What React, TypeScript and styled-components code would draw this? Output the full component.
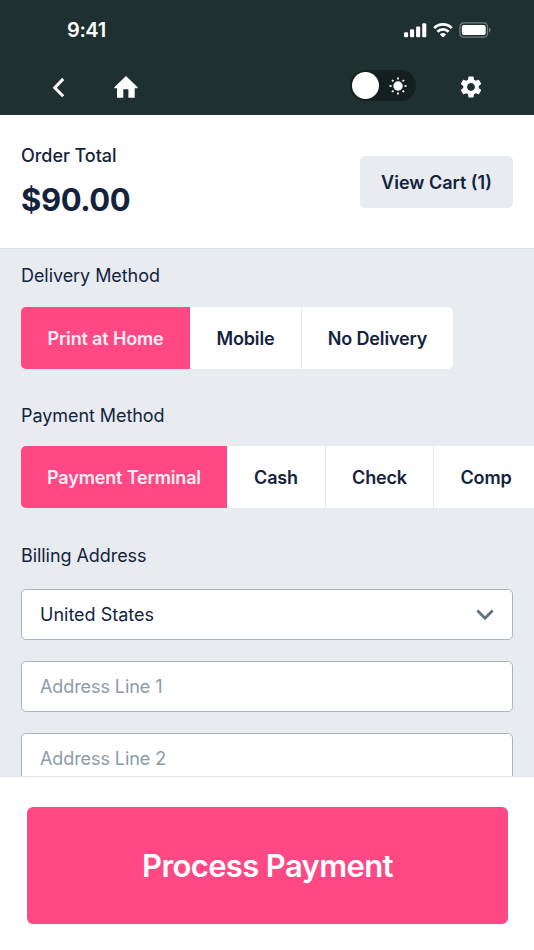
import React from "react";
import styled, { createGlobalStyle } from "styled-components";
import { MdSettings } from "react-icons/md";

const GlobalStyle = createGlobalStyle`
  *, *::before, *::after { box-sizing: border-box; }
  html, body { margin: 0; height: 100%; }
  #root { height: 100%; }
  body {
    font-family: Inter, "Liberation Sans", sans-serif;
    color: #14233d;
    background: #fff;
    overflow: hidden;
  }
  button, input { font: inherit; color: inherit; margin: 0; }
  svg { display: block; flex: none; }
`;

const Screen = styled.div`
  width: 534px;
  height: 950px;
  display: flex;
  flex-direction: column;
  overflow: hidden;
  background: #fff;
`;

const Header = styled.header`
  flex: none;
  height: 115px;
  background: #1e302f;
  color: #fff;
`;

const StatusBar = styled.div`
  height: 60px;
  padding: 0 43px 0 67px;
  display: flex;
  align-items: center;
  justify-content: space-between;
`;

const Clock = styled.span`
  font-size: 20px;
  font-weight: 600;
  line-height: 24px;
  letter-spacing: -0.4px;
`;

const StatusIcons = styled.div`
  display: flex;
  align-items: center;
  gap: 6px;
`;

const NavBar = styled.nav`
  height: 53px;
  padding: 0 50px;
  display: flex;
  align-items: center;
  justify-content: space-between;
`;

const NavGroup = styled.div<{ $gap: number }>`
  display: flex;
  align-items: center;
  gap: ${(p) => p.$gap}px;
`;

const IconButton = styled.button`
  display: flex;
  padding: 0;
  border: 0;
  background: none;
  color: #fff;
`;

const ThemeToggle = styled.button`
  width: 66px;
  height: 31px;
  margin-bottom: 2px;
  padding: 0 8px 0 2px;
  display: flex;
  align-items: center;
  justify-content: space-between;
  border: 0;
  border-radius: 16px;
  background: #13201f;
  color: #fff;
`;

const Knob = styled.span`
  width: 27px;
  height: 27px;
  border-radius: 50%;
  background: #fff;
`;

const Summary = styled.section`
  flex: none;
  height: 134px;
  padding: 0 21px;
  display: flex;
  justify-content: space-between;
  align-items: center;
  border-bottom: 1px solid #d9e1ea;
`;

const TotalLabel = styled.div`
  margin-top: 1px;
  font-size: 18px;
  line-height: 24px;
  font-weight: 500;
  letter-spacing: -0.05px;
`;

const TotalAmount = styled.div`
  margin-top: 12px;
  font-size: 31px;
  line-height: 40px;
  font-weight: 700;
  letter-spacing: -0.4px;
`;

const CartButton = styled.button`
  width: 153px;
  height: 52px;
  padding: 1px 0 0;
  border: 0;
  border-radius: 5px;
  background: #e8ebf0;
  font-size: 18px;
  font-weight: 600;
`;

const Content = styled.main`
  flex: 1;
  min-height: 0;
  overflow: hidden;
  padding-left: 21px;
  background: #e8ebf0;
`;

const SectionTitle = styled.h2<{ $top: number; $bottom: number }>`
  margin: ${(p) => p.$top}px 0 ${(p) => p.$bottom}px;
  font-size: 18px;
  line-height: 24px;
  font-weight: 400;
  letter-spacing: -0.06px;
`;

const Segments = styled.div`
  height: 62px;
  display: flex;
  overflow: hidden;
`;

const Segment = styled.button<{ $width: number; $active?: boolean }>`
  flex: none;
  width: ${(p) => p.$width}px;
  padding: 0;
  border: 0;
  font-size: 18px;
  font-weight: 600;
  letter-spacing: -0.15px;
  color: ${(p) => (p.$active ? "#ffeff4" : "#14233d")};
  background: ${(p) => (p.$active ? "#ff4884" : "#fff")};
  &:first-child { border-radius: 5px 0 0 5px; }
  &:last-child { border-radius: 0 5px 5px 0; }
  &:nth-child(n + 3) { border-left: 1px solid #e8ebf3; }
`;

const Fields = styled.div`
  display: flex;
  flex-direction: column;
  gap: 21px;
  padding-right: 21px;
`;

const Field = styled.div`
  flex: none;
  height: 51px;
  padding: 0 18px;
  display: flex;
  align-items: center;
  justify-content: space-between;
  border: 1px solid #aab5c4;
  border-radius: 5px;
  background: #fff;
  font-size: 18px;
`;

const TextInput = styled.input`
  width: 100%;
  padding: 0;
  border: 0;
  outline: 0;
  background: transparent;
  letter-spacing: -0.08px;
  &::placeholder { color: #8c9bab; opacity: 1; }
`;

const Footer = styled.footer`
  flex: none;
  height: 174px;
  padding: 30px 26px 26px 27px;
  border-top: 1px solid #dfe4ec;
  background: #fff;
`;

const PayButton = styled.button`
  width: 100%;
  height: 117px;
  padding: 0 0 1px;
  border: 0;
  border-radius: 6px;
  background: #ff4884;
  color: #fff;
  font-size: 31px;
  font-weight: 600;
  letter-spacing: -0.62px;
`;

const SignalIcon = () => (
  <svg width="23" height="15" viewBox="0 0 23 15" fill="currentColor">
    <rect x="0" y="9.3" width="4.1" height="5" rx="1.1" />
    <rect x="6" y="6.3" width="4.1" height="8" rx="1.1" />
    <rect x="12.1" y="3.4" width="4.1" height="10.9" rx="1.1" />
    <rect x="18.2" y="0.3" width="4.1" height="14" rx="1.1" />
  </svg>
);

const WifiIcon = () => (
  <svg width="20" height="15" viewBox="0 0 20 15" fill="none" stroke="currentColor" strokeWidth="2.7">
    <path d="M1.2 5.1a12.4 12.4 0 0 1 17.6 0" />
    <path d="M4.4 8.7a7.8 7.8 0 0 1 11.2 0" />
    <path d="M10 14.6 6.9 11.5a4.5 4.5 0 0 1 6.2 0z" fill="currentColor" stroke="none" />
  </svg>
);

const BatteryIcon = () => (
  <svg width="32" height="16" viewBox="0 0 32 16">
    <rect x="0.9" y="0.9" width="27.6" height="14.2" rx="3.7" fill="none" stroke="#74807e" strokeWidth="1.2" />
    <rect x="2.8" y="2.9" width="23.9" height="10.2" rx="2" fill="#fff" />
    <path d="M30 5.6c2 .8 2 4 0 4.8z" fill="#74807e" />
  </svg>
);

const BackIcon = () => (
  <svg width="16" height="22" viewBox="0 0 16 22" fill="none" stroke="currentColor" strokeWidth="3">
    <path d="m13.2 2.9-8.4 8.9 8.4 8.4" />
  </svg>
);

const HomeIcon = () => (
  <svg width="24" height="22" viewBox="0 0 24 22" fill="currentColor">
    <path d="M12 0 .3 11.2v1H3V21.7h6.3v-8.4h5.1v8.4h6.3v-9.5h2.9v-1z" />
  </svg>
);

const SunIcon = () => (
  <svg width="20" height="20" viewBox="-10 -10 20 20" fill="currentColor" stroke="currentColor" strokeWidth="1.7">
    <circle r="4.7" stroke="none" />
    {[0, 45, 90, 135, 180, 225, 270, 315].map((angle) => (
      <path key={angle} d="M0-8.5v2.1" transform={`rotate(${angle})`} />
    ))}
  </svg>
);

const ChevronIcon = () => (
  <svg width="18" height="12" viewBox="0 0 18 12" fill="none" stroke="#617283" strokeWidth="2.8">
    <path d="m1.4 1.5 7.6 7.7 7.6-7.7" />
  </svg>
);

const deliveryMethods = [
  { name: "Print at Home", width: 169 },
  { name: "Mobile", width: 111 },
  { name: "No Delivery", width: 152 },
];

const paymentMethods = [
  { name: "Payment Terminal", width: 206 },
  { name: "Cash", width: 98 },
  { name: "Check", width: 108 },
  { name: "Comp", width: 105 },
];

const SegmentedControl = ({ items }: { items: { name: string; width: number }[] }) => (
  <Segments>
    {items.map((item, index) => (
      <Segment key={item.name} $width={item.width} $active={index === 0}>
        {item.name}
      </Segment>
    ))}
  </Segments>
);

export default function App() {
  return (
    <>
      <GlobalStyle />
      <Screen>
        <Header>
          <StatusBar>
            <Clock>9:41</Clock>
            <StatusIcons>
              <SignalIcon />
              <WifiIcon />
              <BatteryIcon />
            </StatusIcons>
          </StatusBar>
          <NavBar>
            <NavGroup $gap={48}>
              <IconButton aria-label="Back"><BackIcon /></IconButton>
              <IconButton aria-label="Home"><HomeIcon /></IconButton>
            </NavGroup>
            <NavGroup $gap={42}>
              <ThemeToggle aria-label="Light theme">
                <Knob />
                <SunIcon />
              </ThemeToggle>
              <IconButton aria-label="Settings"><MdSettings size={26} /></IconButton>
            </NavGroup>
          </NavBar>
        </Header>
        <Summary>
          <div>
            <TotalLabel>Order Total</TotalLabel>
            <TotalAmount>$90.00</TotalAmount>
          </div>
          <CartButton>View Cart (1)</CartButton>
        </Summary>
        <Content>
          <SectionTitle $top={15} $bottom={19}>Delivery Method</SectionTitle>
          <SegmentedControl items={deliveryMethods} />
          <SectionTitle $top={35} $bottom={18}>Payment Method</SectionTitle>
          <SegmentedControl items={paymentMethods} />
          <SectionTitle $top={36} $bottom={21}>Billing Address</SectionTitle>
          <Fields>
            <Field>
              <span>United States</span>
              <ChevronIcon />
            </Field>
            <Field><TextInput placeholder="Address Line 1" /></Field>
            <Field><TextInput placeholder="Address Line 2" /></Field>
          </Fields>
        </Content>
        <Footer>
          <PayButton>Process Payment</PayButton>
        </Footer>
      </Screen>
    </>
  );
}
